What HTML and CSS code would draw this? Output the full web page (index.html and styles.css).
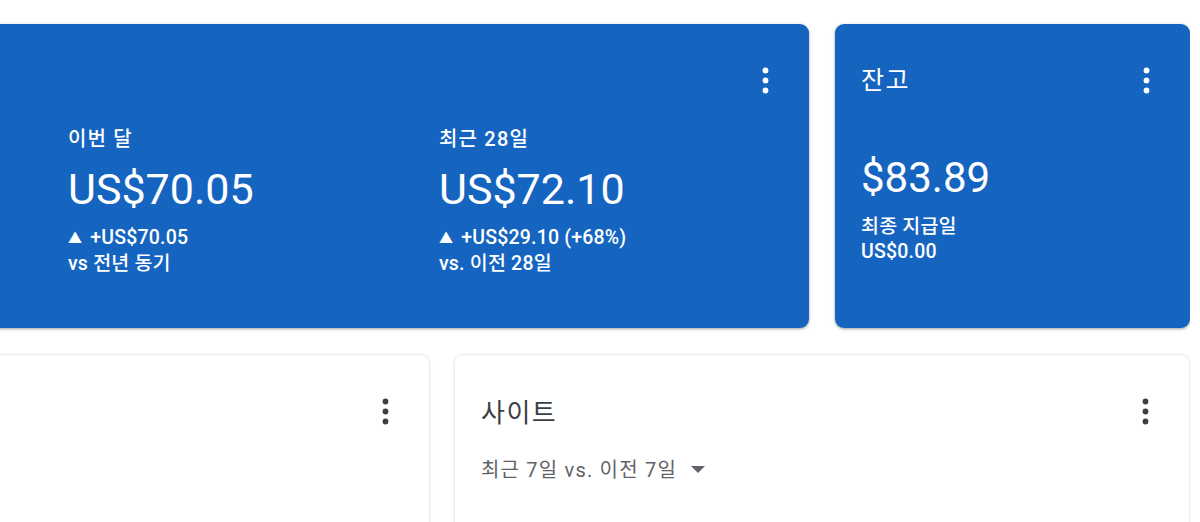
FILE: index.html
```html
<!DOCTYPE html>
<html lang="ko">
<head>
<meta charset="utf-8">
<title>AdSense</title>
<link rel="stylesheet" href="styles.css">
</head>
<body>
<main class="page">
  <section class="row row-top">
    <div class="card card-blue card-earn">
      <div class="card-head">
        <button class="kebab kebab-light" aria-label="더보기">
          <svg width="7" height="27" viewBox="0 0 7 27"><circle cx="3.5" cy="3.5" r="2.9"/><circle cx="3.5" cy="13.5" r="2.9"/><circle cx="3.5" cy="23.5" r="2.9"/></svg>
        </button>
      </div>
      <div class="stats">
        <div class="stat">
          <div class="stat-label">이번 달</div>
          <div class="stat-value">US$70.05</div>
          <div class="stat-sub"><span class="up">▲</span>+US$70.05</div>
          <div class="stat-sub">vs 전년 동기</div>
        </div>
        <div class="stat">
          <div class="stat-label">최근 28일</div>
          <div class="stat-value">US$72.10</div>
          <div class="stat-sub"><span class="up">▲</span>+US$29.10 (+68%)</div>
          <div class="stat-sub">vs. 이전 28일</div>
        </div>
      </div>
    </div>
    <div class="card card-blue card-balance">
      <div class="card-head">
        <h2 class="balance-title">잔고</h2>
        <button class="kebab kebab-light" aria-label="더보기">
          <svg width="7" height="27" viewBox="0 0 7 27"><circle cx="3.5" cy="3.5" r="2.9"/><circle cx="3.5" cy="13.5" r="2.9"/><circle cx="3.5" cy="23.5" r="2.9"/></svg>
        </button>
      </div>
      <div class="balance-value">$83.89</div>
      <div class="stat-sub">최종 지급일</div>
      <div class="stat-sub">US$0.00</div>
    </div>
  </section>
  <section class="row row-bottom">
    <div class="card card-white">
      <div class="card-head">
        <button class="kebab kebab-dark" aria-label="더보기">
          <svg width="7" height="27" viewBox="0 0 7 27"><circle cx="3.5" cy="3.5" r="2.9"/><circle cx="3.5" cy="13.5" r="2.9"/><circle cx="3.5" cy="23.5" r="2.9"/></svg>
        </button>
      </div>
    </div>
    <div class="card card-white card-sites">
      <div class="card-head">
        <h2 class="white-title">사이트</h2>
        <button class="kebab kebab-dark" aria-label="더보기">
          <svg width="7" height="27" viewBox="0 0 7 27"><circle cx="3.5" cy="3.5" r="2.9"/><circle cx="3.5" cy="13.5" r="2.9"/><circle cx="3.5" cy="23.5" r="2.9"/></svg>
        </button>
      </div>
      <div class="range">최근 7일 vs. 이전 7일
        <svg class="caret" width="14" height="8" viewBox="0 0 14 8"><path d="M0 0 L14 0 L7 7 Z"/></svg>
      </div>
    </div>
  </section>
</main>
</body>
</html>
```
FILE: styles.css
```css
html, body {
  margin: 0;
  padding: 0;
  background: #ffffff;
  height: 522px;
  overflow: hidden;
}
body {
  font-family: Roboto, "Noto Sans CJK KR", sans-serif;
  color: #3c4043;
}
.page {
  margin-left: -30px;
  width: 1220px;
  height: 522px;
  box-sizing: border-box;
  overflow: hidden;
  padding-top: 24px;
  display: flex;
  flex-direction: column;
  gap: 26px;
}
.row {
  display: grid;
}
.row-top {
  grid-template-columns: 1fr 355px;
  column-gap: 26px;
  height: 304px;
  flex: none;
}
.row-bottom {
  grid-template-columns: 1fr 736px;
  column-gap: 24px;
  height: 190px;
  flex: none;
}
.card {
  border-radius: 9px;
  box-sizing: border-box;
  position: relative;
}
.card-blue {
  background: #1565c0;
  color: #ffffff;
  box-shadow: 0 1px 2px rgba(60, 64, 67, 0.3), 0 1px 3px 1px rgba(60, 64, 67, 0.15);
}
.card-white {
  background: #ffffff;
  border: 1px solid #ececec;
  box-shadow: 0 1px 3px rgba(60, 64, 67, 0.12);
}
.card-head {
  display: flex;
  justify-content: flex-end;
  align-items: flex-start;
}
.kebab {
  background: none;
  border: 0;
  padding: 0;
  width: 7px;
  height: 27px;
  display: block;
}
.kebab svg { display: block; }
.kebab-light svg { fill: #ffffff; }
.kebab-dark svg { fill: #3c4043; }

/* earnings card */
.card-earn {
  padding: 43px 40px 0 98px;
}
.stats {
  display: grid;
  grid-template-columns: 371px auto;
  margin-top: 33px;
}
.stat-label {
  font-size: 20px;
  line-height: 24px;
  font-weight: 500;
  letter-spacing: 1.2px;
}
.stat-value {
  font-size: 43px;
  line-height: 52px;
  margin-top: 12px;
}
.stat-value + .stat-sub {
  margin-top: 10px;
}
.stat-sub {
  font-size: 19.5px;
  line-height: 25px;
  font-weight: 500;
  letter-spacing: 0.2px;
}
.up {
  font-size: 14px;
  margin-right: 8px;
  vertical-align: 1px;
}

/* balance card */
.card-balance {
  padding: 43px 40px 0 26px;
}
.card-balance .card-head {
  justify-content: space-between;
}
.balance-title {
  margin: 0;
  font-size: 25px;
  line-height: 28px;
  font-weight: 400;
  letter-spacing: 1.5px;
}
.balance-value {
  font-size: 42px;
  line-height: 50px;
  margin-top: 58px;
}
.balance-value + .stat-sub {
  margin-top: 11px;
}

/* bottom cards */
.card-white {
  padding: 43px 40px 0 26px;
}
.card-sites .card-head {
  justify-content: space-between;
}
.white-title {
  margin: 0;
  font-size: 26px;
  line-height: 30px;
  font-weight: 400;
  letter-spacing: 1.5px;
  color: #3c4043;
}
.range {
  margin-top: 30px;
  font-size: 20px;
  line-height: 24px;
  letter-spacing: 1.2px;
  color: #5f6368;
  display: flex;
  align-items: center;
  gap: 14px;
}
.caret { fill: #5f6368; }
```
